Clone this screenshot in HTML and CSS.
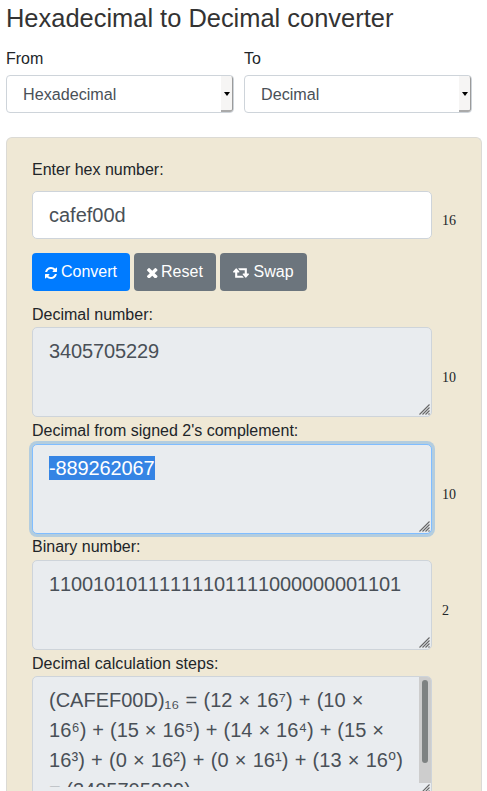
FILE: index.html
```html
<!DOCTYPE html>
<html lang="en">
<head>
<meta charset="utf-8">
<title>Hexadecimal to Decimal converter</title>
<link rel="stylesheet" href="styles.css">
</head>
<body>
<svg width="0" height="0" class="defs"><defs>
<symbol id="grip" viewBox="0 0 11 11"><path d="M.5 10.500 10.500.5M3.500 10.500l7-7M6.500 10.500l4-4M9.500 10.500l1-1" fill="none" stroke="#666" stroke-width="1.100"/></symbol>
</defs></svg>
<main>
  <h1>Hexadecimal to Decimal converter</h1>
  <div class="bases">
    <div><div class="label">From</div><div class="select"><span>Hexadecimal</span><i class="arrow"></i></div></div>
    <div><div class="label">To</div><div class="select"><span>Decimal</span><i class="arrow"></i></div></div>
  </div>
  <section class="card">
    <div class="label first">Enter hex number:</div>
    <div class="row"><div class="input">cafef00d</div><span class="base">16</span></div>
    <div class="buttons">
      <div class="btn primary"><svg width="12" height="12" viewBox="0 0 1536 1536" fill="currentColor"><path d="M1511 928q0 5-1 7-64 268-268 434.500T764 1536q-146 0-282.500-55T238 1324l-129 129q-19 19-45 19t-45-19-19-45V960q0-26 19-45t45-19h448q26 0 45 19t19 45-19 45l-137 137q71 66 161 102t187 36q134 0 250-65t186-179q11-17 53-117 8-23 30-23h192q13 0 22.500 9.500t9.500 22.500zm25-800v448q0 26-19 45t-45 19h-448q-26 0-45-19t-19-45 19-45l138-138Q969 256 768 256q-134 0-250 65T332 500q-11 17-53 117-8 23-30 23H50q-13 0-22.500-9.500T18 608v-7q65-268 270-434.500T768 0q146 0 284 55.500T1297 212l130-129q19-19 45-19t45 19 19 45z"/></svg><span>Convert</span></div>
      <div class="btn reset"><svg width="10.5" height="10.5" viewBox="0 0 1188 1188" fill="currentColor"><path d="M1188 956q0 40-28 68l-136 136q-28 28-68 28t-68-28L594 866l-294 294q-28 28-68 28t-68-28L28 1024q-28-28-28-68t28-68l294-294L28 300Q0 272 0 232t28-68L164 28q28-28 68-28t68 28l294 294L888 28q28-28 68-28t68 28l136 136q28 28 28 68t-28 68L866 594l294 294q28 28 28 68z"/></svg><span>Reset</span></div>
      <div class="btn swap"><svg width="16" height="10" viewBox="0 0 1920 1152" fill="currentColor"><path d="M1280 1120q0 13-9.500 22.500t-22.500 9.500H288q-8 0-13.500-2t-9-7-5.500-8-3-11.500-1-11.500V512H64q-26 0-45-19T0 448q0-24 15-41L335 23q19-22 49-22t49 22l320 384q15 17 15 41 0 26-19 45t-45 19H512v384h576q16 0 25 11l160 192q7 10 7 21zm640-416q0 24-15 41l-320 384q-20 23-49 23t-49-23l-320-384q-15-17-15-41 0-26 19-45t45-19h192V256H832q-16 0-25-12L647 52q-7-9-7-20 0-13 9.500-22.500T672 0h960q8 0 13.500 2t9 7 5.500 8 3 11.500 1 11.500v600h192q26 0 45 19t19 45z"/></svg><span>Swap</span></div>
    </div>
    <div class="field"><div class="label">Decimal number:</div><div class="row"><div class="area">3405705229<svg class="grip"><use href="#grip"/></svg></div><span class="base">10</span></div></div>
    <div class="field"><div class="label">Decimal from signed 2's complement:</div><div class="row"><div class="area focus"><span class="selected">-889262067</span><svg class="grip"><use href="#grip"/></svg></div><span class="base">10</span></div></div>
    <div class="field"><div class="label">Binary number:</div><div class="row"><div class="area">11001010111111101111000000001101<svg class="grip"><use href="#grip"/></svg></div><span class="base">2</span></div></div>
    <div class="field"><div class="label wide">Decimal calculation steps:</div><div class="row"><div class="area steps"><div class="text"><div class="line1">(CAFEF00D)₁₆ = (12 × 16⁷) + (10 ×</div><div class="line2">16⁶) + (15 × 16⁵) + (14 × 16⁴) + (15 ×</div><div class="line3">16³) + (0 × 16²) + (0 × 16¹) + (13 × 16⁰)</div><div>= (3405705229)</div></div><div class="scroll"><i></i></div><svg class="grip"><use href="#grip"/></svg></div></div></div>
  </section>
</main>
</body>
</html>
```
FILE: styles.css
```css
* { box-sizing: border-box; }
html, body { margin: 0; height: 791px; overflow: hidden; }
body { background: #fff; color: #212529; font: 16px/24px "Liberation Sans", "DejaVu Sans", sans-serif; }
.defs { position: absolute; }
main { height: 791px; overflow: hidden; padding: 2px 5px 0 6px; }
h1 { margin: 0; font-size: 25.45px; font-weight: 400; line-height: 32px; color: #333; white-space: nowrap; }
.bases { display: grid; grid-template-columns: 228px 228px; gap: 10px; padding-top: 13px; }
.bases .label { height: 28px; }
.select { display: flex; justify-content: space-between; height: 38px; border: 1px solid #ced4da; border-radius: 4px; padding-left: 16px; font-size: 16.15px; line-height: 37px; color: #495057; overflow: hidden; }
.arrow { display: flex; align-items: center; justify-content: center; width: 13px; margin-right: -1px; background: #f6f5f4; border-right: 2px solid #9b9b9b; border-bottom: 2px solid #aaa; border-radius: 0 3px 3px 0; }
.arrow::after { content: ""; margin: 1px 0 0 1px; border: 3px solid transparent; border-top: 4px solid #000; border-bottom: 0; }
.card { width: 476px; height: 654px; margin-top: 24px; padding: 20px 25px 0; background: #efe8d5; border: 1px solid #dbdad5; border-bottom: 0; border-radius: 6px 6px 0 0; overflow: hidden; }
.label { height: 24px; }
.label.first { height: 33px; }
.wide { letter-spacing: .06px; }
.row { display: flex; align-items: center; gap: 10px; }
.input { width: 400px; height: 48px; padding: 0 16px; border: 1px solid #ced4da; border-radius: 5px; background: #fff; color: #495057; font-size: 20px; line-height: 46px; font-kerning: none; }
.base { font: 14px/20px "Liberation Serif", serif; padding-top: 12px; }
.buttons { display: flex; gap: 4px; padding: 14px 0 12px; }
.btn { display: flex; align-items: center; gap: 4px; height: 38px; padding: 0 13px; border-radius: 4px; background: #6c757d; color: #fff; }
.btn svg { margin-top: 2px; }
.btn span { line-height: 36px; }
.primary { background: #007bff; }
.reset { gap: 3.5px; }
.swap { gap: 4.7px; }
.field { height: 116.2px; }
.area { position: relative; width: 400px; height: 90px; padding: 8px 16px; border: 1px solid #ced4da; border-radius: 5px; background: #e9ecef; color: #495057; font-size: 20px; line-height: 30px; font-kerning: none; letter-spacing: -.125px; }
.field .label { height: 24.4px; }
.focus { border-color: #80bdff; box-shadow: 0 0 0 3px rgba(0, 123, 255, .25); }
.selected { display: inline-block; height: 24px; margin-top: 3px; line-height: 24px; background: #3584e4; color: #fff; vertical-align: top; }
.grip { position: absolute; right: 1px; bottom: 1px; width: 11px; height: 11px; }
.steps { height: 121px; overflow: hidden; white-space: nowrap; letter-spacing: 0; }
.text { width: 370px; height: 102px; overflow: hidden; }
.line1 { word-spacing: .65px; }
.line2 { letter-spacing: .08px; word-spacing: .2px; }
.line3 { letter-spacing: .09px; word-spacing: .45px; }
.scroll { position: absolute; right: 0; top: 0; width: 12px; height: 106px; padding: 3px; background: #cdcdcd; }
.scroll i { display: block; width: 6px; height: 83px; border-radius: 3px; background: #7e8282; }
```
